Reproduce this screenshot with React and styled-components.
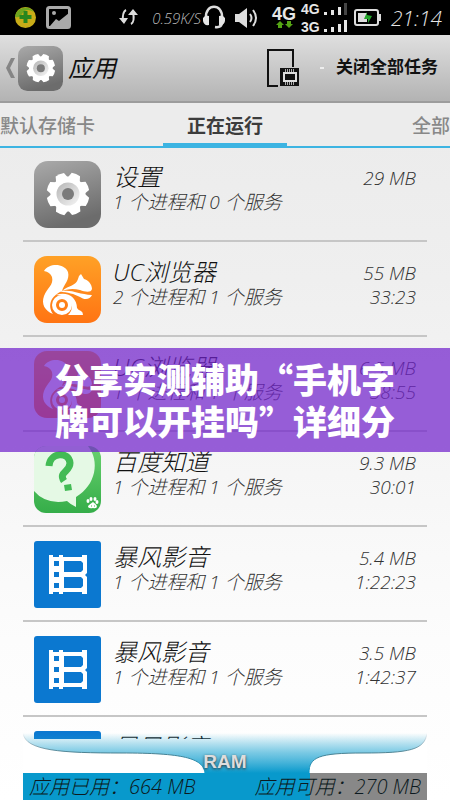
import React from "react";
import styled, { createGlobalStyle } from "styled-components";

const sans = `"Liberation Sans", "Noto Sans CJK SC", sans-serif`;
const script = `"Open Sans", "Noto Sans CJK SC", sans-serif`;

const GlobalStyle = createGlobalStyle`
  * { box-sizing: border-box; }
  body { margin: 0; background: #fff; }
  button { border: 0; padding: 0; background: none; color: inherit; font: inherit; cursor: pointer; }
  ul { margin: 0; padding: 0; list-style: none; }
  h1, h2, p { margin: 0; font-weight: inherit; font-size: inherit; }
  svg { display: block; flex: none; }
`;

const Screen = styled.div`
  position: relative;
  display: flex;
  flex-direction: column;
  height: 100vh;
  overflow: hidden;
  background: linear-gradient(#e9e9e9, #efefef 35%, #fcfcfc 80%, #fff);
  font-family: ${sans};
`;

const StatusBar = styled.header`
  display: flex;
  align-items: center;
  flex: none;
  height: 35px;
  padding: 0 8px 0 14px;
  background: #000;
  color: #e8e8e8;
`;

const Notices = styled.div`
  display: flex;
  align-items: center;
  gap: 9px;
  margin-right: auto;
`;

const Speed = styled.span`
  padding-left: 12px;
  font: italic 300 15px/20px ${script};
  color: #bbb;
`;

const Clock = styled.time`
  padding-left: 5px;
  font: italic 300 21px/32px ${script};
  color: #e6e6e6;
`;

const ActionBar = styled.div`
  display: flex;
  align-items: center;
  flex: none;
  height: 68px;
  padding: 0 12px 0 6px;
  border-bottom: 2px solid #9c9c9c;
  background: linear-gradient(#dfdfdf, #b3b3b3);
`;

const BackButton = styled.button`
  display: flex;
  align-items: center;
  gap: 3px;
  margin-right: auto;
`;

const PageTitle = styled.h1`
  padding-left: 2px;
  font: italic 400 24px/32px ${script};
  color: #111;
`;

const CloseAll = styled.button`
  font: 700 17px/32px ${sans};
  color: #111;
`;

const Dash = styled.i`
  width: 4px;
  height: 2px;
  margin: 0 12px 0 20px;
  background: #eee;
`;

const Tabs = styled.nav`
  display: grid;
  grid-template-columns: 1fr 124px 1fr;
  flex: none;
  height: 45px;
  overflow: hidden;
  border-bottom: 2px solid #3cb4e2;
  background: #ececec;
`;

const Tab = styled.button`
  display: flex;
  justify-content: ${(p) => p.$align};
  padding-top: 9px;
  overflow: hidden;
  border-bottom: ${(p) => (p.$active ? "3px solid #3cb4e2" : "0")};
  font: ${(p) => (p.$active ? 700 : 500)} 19px/30px ${sans};
  color: ${(p) => (p.$active ? "#3c3c3c" : "#888")};
  white-space: nowrap;
`;

const ProcessList = styled.ul`
  flex: 1;
  min-height: 0;
  overflow: hidden;
  margin: 0 23px;
`;

const Row = styled.li`
  display: flex;
  gap: 12px;
  padding: 14px 11px 12px;
  border-bottom: 2px solid #c6c6c6;

  &:first-child { padding-top: 13px; }
`;

const Info = styled.div`
  flex: 1;
  min-width: 0;
  padding-top: 2px;
  font-family: ${script};
  font-style: italic;
  font-weight: 300;
  white-space: nowrap;
`;

const Name = styled.h2`
  font-size: 24px;
  line-height: 27px;
  color: #111;
`;

const Detail = styled.p`
  font-size: 19px;
  line-height: 24px;
  color: #333;
`;

const Usage = styled.div`
  padding-top: 5px;
  font: italic 300 19px/24px ${script};
  color: #333;
  text-align: right;
  white-space: nowrap;
`;

const Footer = styled.footer`
  position: relative;
  flex: none;
  margin: -6px 23px 0;
`;

const RamCurve = styled.svg`
  width: 100%;
  height: 40px;
`;

const RamLabel = styled.span`
  position: absolute;
  top: 17px;
  left: 0;
  right: 0;
  font: 700 19px/24px ${sans};
  color: #ddd;
  text-align: center;
  text-shadow: 0 1px 3px #333;
`;

const MemoryBar = styled.div`
  display: flex;
  justify-content: space-between;
  height: 27px;
  padding: 0 6px;
  background: linear-gradient(to right, #0899cc 71%, #888 71%);
  font: italic 300 20px/27px ${script};
  color: #0c1a20;
  white-space: nowrap;
`;

const Banner = styled.div`
  position: absolute;
  top: 348px;
  left: 0;
  right: 0;
  display: flex;
  justify-content: center;
  padding: 10px 0;
  background: rgba(114, 35, 204, 0.72);
`;

const BannerText = styled.p`
  width: 340px;
  font: 900 34px/42px "Noto Sans CJK SC", sans-serif;
  color: #fff;
`;

function GearIcon({ size }) {
  return (
    <svg width={size} height={size} viewBox="0 0 67 67" aria-hidden="true">
      <defs>
        <linearGradient id="gearBg" x1="0" y1="0" x2="0.3" y2="1">
          <stop offset="0" stopColor="#aaa" />
          <stop offset="1" stopColor="#6c6c6c" />
        </linearGradient>
        <linearGradient id="gearHub" x1="0" y1="0" x2="1" y2="1">
          <stop offset="0" stopColor="#b5b5b5" />
          <stop offset="1" stopColor="#f6f6f6" />
        </linearGradient>
      </defs>
      <rect width="67" height="67" rx="14" fill="url(#gearBg)" />
      <g fill="#fff">
        <circle cx="34" cy="33" r="17.5" />
        {[22, 67, 112, 157].map((a) => (
          <path key={a} d="M27.500 18L29.500 12Q34 11 38.500 12L40.500 18V48L38.500 54Q34 55 29.500 54L27.500 48Z" transform={`rotate(${a} 34 33)`} />
        ))}
      </g>
      <circle cx="34" cy="33" r="11.500" fill="url(#gearHub)" />
      <circle cx="34" cy="33" r="6" fill="#7a7a7a" />
    </svg>
  );
}

function SquirrelIcon() {
  return (
    <svg width="67" height="67" viewBox="0 0 67 67" aria-hidden="true">
      <defs>
        <linearGradient id="ucBg" x1="0" y1="0" x2="0" y2="1">
          <stop offset="0" stopColor="#ffa126" />
          <stop offset="1" stopColor="#ff7413" />
        </linearGradient>
      </defs>
      <rect width="67" height="67" rx="13" fill="url(#ucBg)" />
      <g fill="#fff">
        <path d="M10 15C15 7 30 7 34 16C36 24 30 28 28 35C35 29 42 30 44 23Q44 20 47 18L50 23C54 24 58 28 58 33C57 37 51 36 46 34C36 31 24 34 18 43C15 48 16 54 19 58C11 55 7 48 10 40C13 32 20 29 18 21Q16 16 10 15Z" />
        <path d="M25 36C36 32 43 38 58 39C56 44 50 44 46 41C40 38 34 36 25 36Z" />
        <path d="M22 39C34 35 43 42 43 52Q44 54 47 55Q49 56 49 59H34C43 51 35 39 22 39Z" />
      </g>
      <circle cx="28" cy="49" r="8" fill="none" stroke="#fff" strokeWidth="4" />
      <circle cx="28" cy="49" r="3" fill="#fff" />
    </svg>
  );
}

function QuestionIcon() {
  return (
    <svg width="67" height="67" viewBox="0 0 67 67" aria-hidden="true">
      <defs>
        <clipPath id="askClip"><rect width="67" height="67" rx="12" /></clipPath>
        <linearGradient id="askBg" x1="0" y1="0" x2="0" y2="1">
          <stop offset="0" stopColor="#69d16f" />
          <stop offset="1" stopColor="#35ad49" />
        </linearGradient>
      </defs>
      <g clipPath="url(#askClip)">
        <rect width="67" height="67" fill="url(#askBg)" />
        <path fill="#e5f9e5" d="M0 0H54C66 15 62 39 42 51V61Q36 58 33 55Q12 59 0 45Z" />
        <path fill="none" stroke="#43bb55" strokeWidth="7" d="M15 20C16 6 35 5 36 17C36 26 24 26 30 35" />
        <path fill="#43bb55" d="M30 39L37 38L38 44L31 45Z" />
        <g fill="#fff">
          <ellipse cx="54" cy="55" rx="1.500" ry="2" />
          <ellipse cx="57" cy="53" rx="1.500" ry="2" />
          <ellipse cx="61" cy="53" rx="1.500" ry="2" />
          <ellipse cx="63" cy="56" rx="1.500" ry="2" />
          <path d="M59 56Q62 58 63 60Q63 63 59 62Q54 63 54 60Q56 58 59 56Z" />
        </g>
        <path stroke="#43bb55" d="M57 60h1M60 60h1" />
      </g>
    </svg>
  );
}

function FilmIcon() {
  return (
    <svg width="67" height="67" viewBox="0 0 67 67" aria-hidden="true">
      <rect width="67" height="67" rx="3" fill="#0b78d0" />
      <path fill="#fff" fillRule="evenodd" d="M15 14h4v2h6v-2h4v2h19v-2h5v39h-5v-2H29v2h-4v-2h-6v2h-4ZM20 20v5h5v-5ZM20 31v5h5v-5ZM20 42v5h5v-5ZM30 20v11h17l2-2v-7l-2-2ZM30 36v11h17l2-2v-7l-2-2Z" />
      <path fill="#0b78d0" d="M53 32l-2 2 2 2Z" />
    </svg>
  );
}

const ICONS = { gear: GearIcon, squirrel: SquirrelIcon, question: QuestionIcon, film: FilmIcon };

const processes = [
  { icon: "gear", name: "设置", detail: "1 个进程和 0 个服务", size: "29 MB" },
  { icon: "squirrel", name: "UC浏览器", detail: "2 个进程和 1 个服务", size: "55 MB", time: "33:23" },
  { icon: "squirrel", name: "UC浏览器", detail: "1 个进程和 1 个服务", size: "6.5 MB", time: "38:55" },
  { icon: "question", name: "百度知道", detail: "1 个进程和 1 个服务", size: "9.3 MB", time: "30:01" },
  { icon: "film", name: "暴风影音", detail: "1 个进程和 1 个服务", size: "5.4 MB", time: "1:22:23" },
  { icon: "film", name: "暴风影音", detail: "1 个进程和 1 个服务", size: "3.5 MB", time: "1:42:37" },
  { icon: "film", name: "暴风影音" },
];

function StatusIcons() {
  return (
    <>
      <Notices>
        <svg width="23" height="23" viewBox="0 0 23 23" aria-hidden="true">
          <circle cx="11.500" cy="11.500" r="10.500" fill="#c9ac18" />
          <path fill="#6fa51f" d="M1 11A10.500 10.500 0 0 1 20 6Q12 1 8 8Q6 12 1 11Z" />
          <path stroke="#28861e" strokeWidth="4" d="M11.500 5v12M5.500 11h12" />
        </svg>
        <svg width="25" height="23" viewBox="0 0 25 23" aria-hidden="true">
          <rect x="1.500" y="1.500" width="22" height="20" rx="2" fill="none" stroke="#aaa" strokeWidth="3" />
          <circle cx="8" cy="7" r="2" fill="#aaa" />
          <path fill="#aaa" d="M4 20l6-7 3 2 10-8v13Z" />
        </svg>
      </Notices>
      <svg width="25" height="35" viewBox="0 0 25 35" aria-hidden="true">
        <path fill="none" stroke="#ddd" strokeWidth="2" d="M11 10Q7 12 8 22M16 24Q20 22 18 12" />
        <path fill="#ddd" d="M4 18h9l-4 6ZM13 15h10l-5-6Z" />
      </svg>
      <Speed>0.59K/S</Speed>
      <svg width="26" height="35" viewBox="0 0 26 35" aria-hidden="true">
        <path fill="none" stroke="#ddd" strokeWidth="2.500" d="M5 18C4 3 22 3 21 18M21 23Q20 28 14 27" />
        <path fill="#e6e6e6" d="M2 18q2-3 6-2v9q-5 1-6-4ZM24 18q-2-3-6-2v9q5 1 6-4Z" />
      </svg>
      <svg width="42" height="35" viewBox="0 0 42 35" aria-hidden="true">
        <path fill="#ddd" d="M8 14h4l8-6v20l-8-6H8Z" />
        <path fill="none" stroke="#ddd" strokeWidth="2" d="M23 14q3 4 0 8M26 10q6 8 0 16" />
      </svg>
      <svg width="30" height="35" viewBox="0 0 30 35" aria-label="4G">
        <text x="3" y="20" fill="#e6e6e6" fontFamily="Liberation Sans, sans-serif" fontWeight="700" fontSize="18">4G</text>
        <path fill="#55a515" d="M11 21l4 4h-2v3H9v-3H7ZM20 28l-4-4h2v-3h4v3h2Z" />
      </svg>
      <svg width="51" height="35" viewBox="0 0 51 35" aria-label="4G 3G">
        <g fill="#e6e6e6" fontFamily="Liberation Sans, sans-serif" fontWeight="700" fontSize="14">
          <text x="2" y="14">4G</text>
          <text x="2" y="32">3G</text>
        </g>
        <path fill="#e6e6e6" d="M25 12h3v3h-3ZM32 10h3v5h-3ZM39 7h3v8h-3ZM25 29h3v3h-3ZM32 27h3v5h-3ZM39 24h3v8h-3ZM45 20h3v12h-3Z" />
        <path fill="#444" d="M45 3h3v12h-3Z" />
      </svg>
      <svg width="36" height="35" viewBox="0 0 36 35" aria-hidden="true">
        <rect x="5" y="10" width="23" height="15" rx="2" fill="none" stroke="#ddd" strokeWidth="2" />
        <path fill="#ddd" d="M29 14h2v7h-2ZM8 13h9v9H8Z" />
        <path fill="#24a52b" d="M17 12v3l5 1-4 7v-4h-4Z" />
      </svg>
      <Clock>21:14</Clock>
    </>
  );
}

export default function App() {
  return (
    <Screen lang="zh-CN">
      <GlobalStyle />
      <StatusBar>
        <StatusIcons />
      </StatusBar>
      <ActionBar>
        <BackButton>
          <svg width="9" height="22" viewBox="0 0 9 22" aria-hidden="true">
            <path fill="#858585" d="M5 1h4L4 11l5 10H5L0 11Z" />
          </svg>
          <GearIcon size="45" />
          <PageTitle>应用</PageTitle>
        </BackButton>
        <svg width="33" height="38" viewBox="0 0 33 38" aria-hidden="true">
          <path fill="none" stroke="#111" strokeWidth="2" d="M26 18V1H1v36h10" />
          <path fill="#111" d="M13 19h19v18H13Z" />
          <rect x="17" y="24" width="12" height="8" fill="none" stroke="#ddd" strokeWidth="2" />
          <path stroke="#aaa" d="M18.500 20v3M20.500 20v3M22.500 20v3M24.500 20v3M26.500 20v3M18.500 33v3M20.500 33v3M22.500 33v3M24.500 33v3M26.500 33v3" />
        </svg>
        <Dash />
        <CloseAll>关闭全部任务</CloseAll>
      </ActionBar>
      <Tabs>
        <Tab $align="flex-start">默认存储卡</Tab>
        <Tab $align="center" $active>正在运行</Tab>
        <Tab $align="flex-end">全部</Tab>
      </Tabs>
      <ProcessList>
        {processes.map((p, i) => {
          const Icon = ICONS[p.icon];
          return (
            <Row key={i}>
              <Icon size="67" />
              <Info>
                <Name>{p.name}</Name>
                {p.detail && <Detail>{p.detail}</Detail>}
              </Info>
              {p.size && (
                <Usage>
                  <p>{p.size}</p>
                  {p.time && <p>{p.time}</p>}
                </Usage>
              )}
            </Row>
          );
        })}
      </ProcessList>
      <Footer>
        <RamCurve viewBox="0 0 404 40" preserveAspectRatio="none" aria-hidden="true">
          <defs>
            <linearGradient id="ram" gradientUnits="userSpaceOnUse" x1="0" y1="0" x2="0" y2="40">
              <stop offset="0" stopColor="#1ba3d0" stopOpacity="0" />
              <stop offset="0.5" stopColor="#2fabd5" stopOpacity="0.65" />
              <stop offset="1" stopColor="#0899cc" />
            </linearGradient>
            <linearGradient id="ramEdge" gradientUnits="userSpaceOnUse" x1="0" y1="0" x2="0" y2="40">
              <stop offset="0" stopColor="#789" stopOpacity="0" />
              <stop offset="0.500" stopColor="#4a8090" />
              <stop offset="1" stopColor="#0899cc" />
            </linearGradient>
          </defs>
          <path fill="#fff" d="M0 6C12 18 40 20 98 20C160 20 180 25 182 40H0ZM404 6C392 18 380 20 320 20C286 20 287 36 286 40H404Z" />
          <path fill="url(#ram)" d="M0 0C2 18 40 20 98 20C160 20 180 25 182 40H286C286 24 296 20 340 20C386 20 402 17 404 0Z" />
          <path fill="none" stroke="url(#ramEdge)" d="M0 0C2 18 40 20 98 20C160 20 180 25 182 40M286 40C286 24 296 20 340 20C386 20 402 17 404 0" />
        </RamCurve>
        <RamLabel>RAM</RamLabel>
        <MemoryBar>
          <span>应用已用：664 MB</span>
          <span>应用可用：270 MB</span>
        </MemoryBar>
      </Footer>
      <Banner>
        <BannerText>分享实测辅助“手机字牌可以开挂吗”详细分</BannerText>
      </Banner>
    </Screen>
  );
}
